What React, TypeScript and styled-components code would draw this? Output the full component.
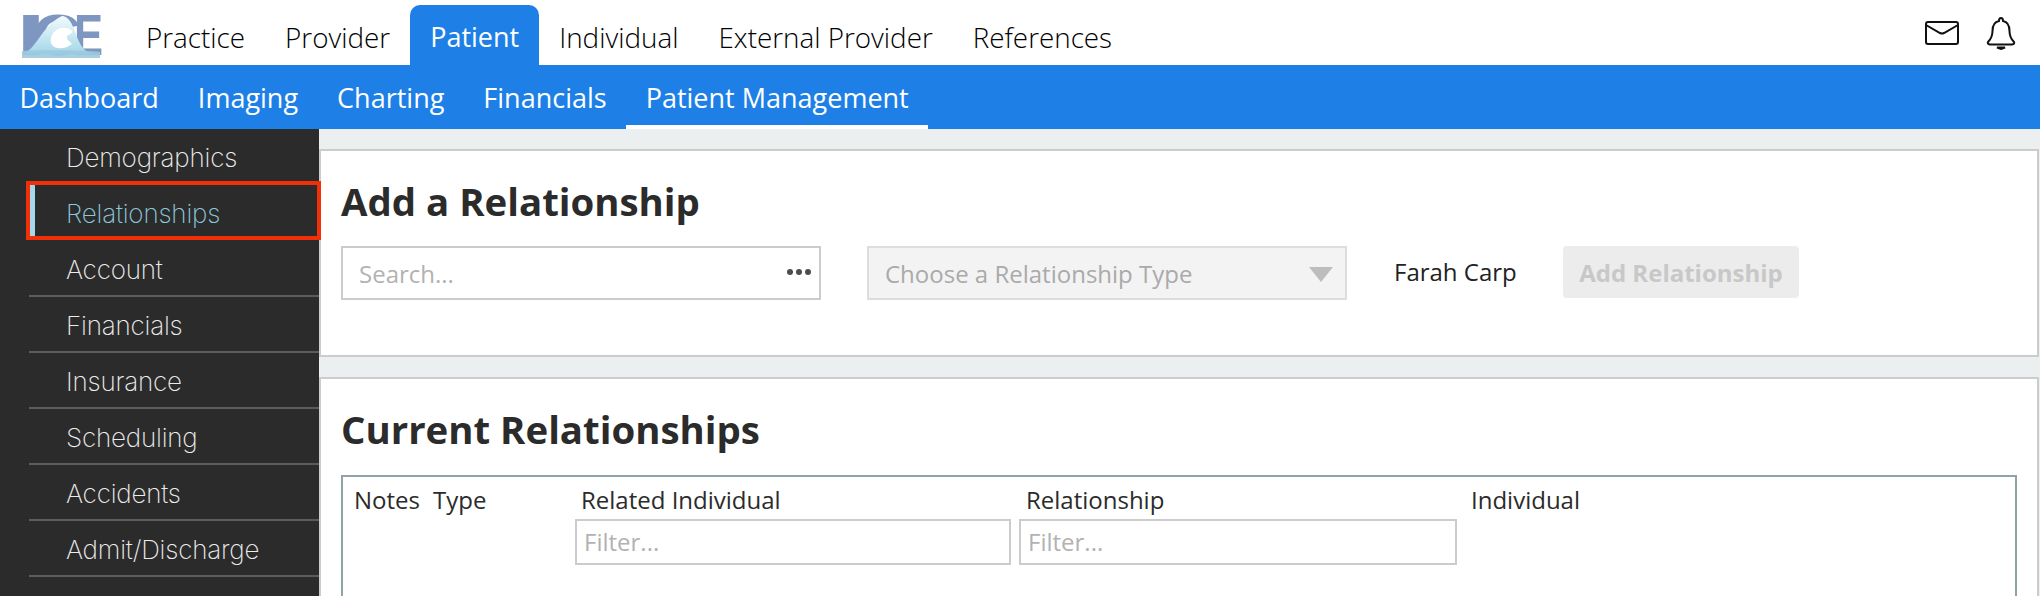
import styled, { createGlobalStyle } from "styled-components";

const GlobalStyle = createGlobalStyle`
  html, body {
    margin: 0;
    padding: 0;
    height: 596px;
    overflow: hidden;
    background: #ebeff0;
    font-family: "Open Sans", sans-serif;
  }
`;

const Page = styled.div`
  width: 2040px;
  height: 596px;
  display: flex;
  flex-direction: column;
  overflow: hidden;
`;

const TopBar = styled.div`
  height: 65px;
  flex: none;
  background: #fff;
  display: flex;
  align-items: flex-end;
  padding: 0 24px 0 14px;
`;

const LogoBox = styled.div`
  width: 112px;
  height: 65px;
  display: flex;
  align-items: flex-start;
  padding: 13px 0 0 7px;
  box-sizing: border-box;
`;

const TopTab = styled.div<{ $active?: boolean }>`
  height: ${(p) => (p.$active ? "60px" : "65px")};
  padding: 0 20px;
  display: flex;
  align-items: center;
  font-size: ${(p) => (p.$active ? "27px" : "27.8px")};
  font-weight: ${(p) => (p.$active ? 400 : 300)};
  color: ${(p) => (p.$active ? "#fff" : "#000")};
  background: ${(p) => (p.$active ? "#1e80e6" : "transparent")};
  border-radius: 10px 10px 0 0;
  padding-top: ${(p) => (p.$active ? "3px" : "8px")};
  box-sizing: border-box;
`;

const TopIcons = styled.div`
  margin-left: auto;
  height: 65px;
  display: flex;
  align-items: center;
  gap: 27px;
  color: #111;
`;

const SubBar = styled.div`
  height: 64px;
  flex: none;
  background: #1e80e6;
  display: flex;
`;

const SubTab = styled.div<{ $active?: boolean }>`
  padding: 0 19.5px;
  display: flex;
  align-items: center;
  font-size: 27px;
  color: #fff;
  box-sizing: border-box;
  border-bottom: 4px solid ${(p) => (p.$active ? "#fff" : "transparent")};
  padding-top: 4px;
`;

const Body = styled.div`
  flex: 1;
  display: flex;
  min-height: 0;
`;

const Side = styled.div`
  width: 319px;
  flex: none;
  background: #2b2b2b;
  padding-left: 29px;
  box-sizing: border-box;
`;

const SideItem = styled.div<{ $active?: boolean }>`
  position: relative;
  height: 56px;
  box-sizing: border-box;
  padding: 2px 0 0 37px;
  display: flex;
  align-items: center;
  font-family: "Inter", sans-serif;
  font-weight: 200;
  font-size: 26px;
  letter-spacing: -0.2px;
  color: ${(p) => (p.$active ? "#8cc8dc" : "#ececec")};
  border-bottom: 2px solid ${(p) => (p.$active ? "transparent" : "#5c5c5c")};
`;

const ActiveMark = styled.span`
  position: absolute;
  left: -3px;
  right: -2px;
  top: -4px;
  bottom: -1px;
  border: 4px solid #f1300a;
  &::before {
    content: "";
    position: absolute;
    left: 0;
    top: 0;
    bottom: 0;
    width: 5px;
    background: #a5d8e8;
  }
`;

const Main = styled.div`
  flex: 1;
  min-width: 0;
  padding: 20px 1px 0 0;
  display: flex;
  flex-direction: column;
  gap: 20px;
`;

const Card = styled.div<{ $fill?: boolean }>`
  background: #fff;
  border: 2px solid #ccc;
  box-sizing: border-box;
  padding: 0 20px;
  height: ${(p) => (p.$fill ? "auto" : "208px")};
  flex: ${(p) => (p.$fill ? "1" : "none")};
  ${(p) => (p.$fill ? "border-bottom: none;" : "")}
`;

const Title = styled.h2`
  margin: 25px 0 0;
  font-size: 38.4px;
  line-height: 50px;
  font-weight: 700;
  color: #2b2b2b;
`;

const FormRow = styled.div`
  display: flex;
  align-items: flex-start;
  margin-top: 20px;
`;

const SearchBox = styled.div`
  width: 480px;
  height: 54px;
  box-sizing: border-box;
  border: 2px solid #ccc;
  display: flex;
  align-items: center;
  justify-content: space-between;
  padding: 0 8px 0 16px;
  font-size: 24px;
  color: #b2b2b2;
`;

const Dots = styled.span`
  display: flex;
  gap: 3px;
  margin-bottom: 3px;
  i {
    width: 6px;
    height: 6px;
    border-radius: 50%;
    background: #4d4d4d;
  }
`;

const SelectBox = styled.div`
  width: 480px;
  height: 54px;
  margin-left: 46px;
  box-sizing: border-box;
  border: 2px solid #ddd;
  background: #f3f3f3;
  display: flex;
  align-items: center;
  justify-content: space-between;
  padding: 0 12px 0 16px;
  font-size: 24px;
  color: #aaa;
`;

const Arrow = styled.span`
  width: 0;
  height: 0;
  border-left: 12px solid transparent;
  border-right: 12px solid transparent;
  border-top: 15px solid #bdbdbd;
  margin-top: 2px;
`;

const PersonName = styled.div`
  margin-left: 47px;
  width: 169px;
  line-height: 52px;
  font-size: 24px;
  color: #222;
`;

const AddButton = styled.div`
  width: 236px;
  height: 52px;
  border-radius: 4px;
  background: #ececec;
  color: #c8c8c8;
  font-size: 24px;
  font-weight: 700;
  display: flex;
  align-items: center;
  justify-content: center;
`;

const TableWrap = styled.div`
  margin-top: 21px;
  width: 1676px;
  height: 200px;
  box-sizing: border-box;
  border: 2px solid #8fa5a5;
`;

const Grid = styled.table`
  border-collapse: collapse;
  table-layout: fixed;
  width: 1130px;
  th {
    padding: 0;
    text-align: left;
    vertical-align: top;
    font-weight: 400;
    font-size: 24px;
    line-height: 30px;
    color: #2b2b2b;
  }
`;

const ColLabel = styled.div<{ $inset?: number }>`
  padding-left: ${(p) => p.$inset ?? 0}px;
  padding-top: 8px;
`;

const FilterBox = styled.div<{ $width: number }>`
  width: ${(p) => p.$width}px;
  height: 46px;
  margin-top: 4px;
  box-sizing: border-box;
  border: 2px solid #ccc;
  padding-left: 7px;
  display: flex;
  align-items: center;
  font-size: 24px;
  font-weight: 400;
  color: #b2b2b2;
`;

const topTabs = ["Practice", "Provider", "Patient", "Individual", "External Provider", "References"];
const subTabs = ["Dashboard", "Imaging", "Charting", "Financials", "Patient Management"];
const sideItems = ["Demographics", "Relationships", "Account", "Financials", "Insurance", "Scheduling", "Accidents", "Admit/Discharge"];

const Logo = () => (
  <svg width="82" height="46" viewBox="0 0 82 46" style={{ overflow: "visible" }}>
    <defs>
      <linearGradient id="iceWave" x1="0" y1="0" x2="0" y2="1">
        <stop offset="0" stopColor="#f2fbfd" />
        <stop offset="1" stopColor="#a3d6e9" />
      </linearGradient>
    </defs>
    <g fontFamily="Liberation Sans" fontWeight="700" fontSize="58" fill="#7d97c0">
      <text x="-5" y="42" textLength="30" lengthAdjust="spacingAndGlyphs">I</text>
      <text x="12" y="42" textLength="48" lengthAdjust="spacingAndGlyphs">C</text>
      <text x="53" y="42" textLength="29" lengthAdjust="spacingAndGlyphs">E</text>
    </g>
    <path d="M2 41 C14 36 20 18 33 8 C37 5 40 3 42 3 C50 5 52 14 56 24 C60 34 64 39 72 41 Z" fill="url(#iceWave)" />
    <path d="M52 19 C48 14 42 14 37 16 C30 19 28 28 31 32 C35 37 45 36 51 31 L46 26 L46 23 Z" fill="#fff" />
    <path d="M1 38 C20 37 60 37 79 39 V45 H1 Z" fill="#9cc9df" opacity="0.9" />
  </svg>
);

const MailIcon = () => (
  <svg width="34" height="24" viewBox="0 0 34 24" fill="none" stroke="#111" strokeWidth="2">
    <rect x="1" y="1" width="32" height="22" rx="2" />
    <path d="M1 4 L15 12 Q17 13 19 12 L33 4" />
  </svg>
);

const BellIcon = () => (
  <svg width="30" height="34" viewBox="0 0 30 34" fill="none" stroke="#111" strokeWidth="2">
    <path d="M15 2 Q13 2 13 5 C8 6 6.500 10 6.500 15 C6.500 21 4 24 2 26 Q1 28 4 28.500 H26 Q29 28 28 26 C26 24 23.500 21 23.500 15 C23.500 10 22 6 17 5 Q17 2 15 2 Z" />
    <path d="M11 31.500 H19 L15 33 Z" fill="#111" />
  </svg>
);

export default function App() {
  return (
    <Page>
      <GlobalStyle />
      <TopBar>
        <LogoBox>
          <Logo />
        </LogoBox>
        {topTabs.map((t) => (
          <TopTab key={t} $active={t === "Patient"}>
            {t}
          </TopTab>
        ))}
        <TopIcons>
          <MailIcon />
          <BellIcon />
        </TopIcons>
      </TopBar>
      <SubBar>
        {subTabs.map((t) => (
          <SubTab key={t} $active={t === "Patient Management"}>
            {t}
          </SubTab>
        ))}
      </SubBar>
      <Body>
        <Side>
          {sideItems.map((t) => (
            <SideItem key={t} $active={t === "Relationships"}>
              {t === "Relationships" && <ActiveMark />}
              {t}
            </SideItem>
          ))}
        </Side>
        <Main>
          <Card>
            <Title>Add a Relationship</Title>
            <FormRow>
              <SearchBox>
                Search...
                <Dots>
                  <i />
                  <i />
                  <i />
                </Dots>
              </SearchBox>
              <SelectBox>
                Choose a Relationship Type
                <Arrow />
              </SelectBox>
              <PersonName>Farah Carp</PersonName>
              <AddButton>Add Relationship</AddButton>
            </FormRow>
          </Card>
          <Card $fill>
            <Title>Current Relationships</Title>
            <TableWrap>
              <Grid>
                <colgroup>
                  <col style={{ width: 90 }} />
                  <col style={{ width: 142 }} />
                  <col style={{ width: 444 }} />
                  <col style={{ width: 452 }} />
                  <col />
                </colgroup>
                <thead>
                  <tr>
                    <th>
                      <ColLabel $inset={11}>Notes</ColLabel>
                    </th>
                    <th>
                      <ColLabel>Type</ColLabel>
                    </th>
                    <th>
                      <ColLabel $inset={6}>Related Individual</ColLabel>
                      <FilterBox $width={436}>Filter...</FilterBox>
                    </th>
                    <th>
                      <ColLabel $inset={7}>Relationship</ColLabel>
                      <FilterBox $width={438}>Filter...</FilterBox>
                    </th>
                    <th>
                      <ColLabel>Individual</ColLabel>
                    </th>
                  </tr>
                </thead>
              </Grid>
            </TableWrap>
          </Card>
        </Main>
      </Body>
    </Page>
  );
}
